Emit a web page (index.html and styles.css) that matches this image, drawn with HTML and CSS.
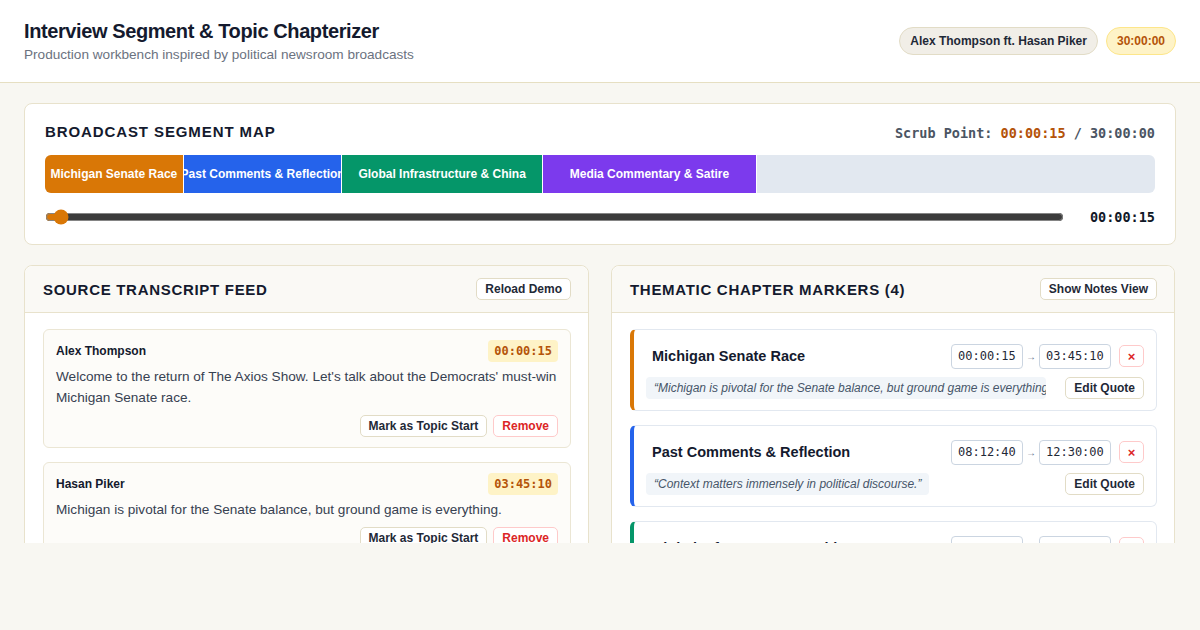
FILE: index.html
```html
<!DOCTYPE html>
<html lang="en">
<head>
<meta charset="utf-8">
<title>Interview Segment &amp; Topic Chapterizer</title>
<link rel="stylesheet" href="styles.css">
</head>
<body>
<header class="topbar">
  <div class="brand">
    <h1>Interview Segment &amp; Topic Chapterizer</h1>
    <p>Production workbench inspired by political newsroom broadcasts</p>
  </div>
  <div class="pills">
    <span class="pill">Alex Thompson ft. Hasan Piker</span>
    <span class="pill pill-time">30:00:00</span>
  </div>
</header>

<main class="main">
  <section class="card map">
    <div class="map-head">
      <h2 class="section-title map-title">BROADCAST SEGMENT MAP</h2>
      <div class="scrub">Scrub Point: <span class="scrub-now">00:00:15</span> / 30:00:00</div>
    </div>
    <div class="seg-bar">
      <div class="seg seg-orange" style="width:12.5%">Michigan Senate Race</div>
      <div class="seg seg-blue" style="width:14.3%">Past Comments &amp; Reflection</div>
      <div class="seg seg-green" style="width:18.05%">Global Infrastructure &amp; China</div>
      <div class="seg seg-purple" style="width:19.3%">Media Commentary &amp; Satire</div>
    </div>
    <div class="scrub-row">
      <input class="scrubber" type="range" min="0" max="1800" value="15">
      <span class="scrub-time">00:00:15</span>
    </div>
  </section>

  <div class="columns">
    <section class="panel">
      <div class="panel-head">
        <h2 class="section-title">SOURCE TRANSCRIPT FEED</h2>
        <button class="btn">Reload Demo</button>
      </div>
      <div class="panel-body">
        <article class="line">
          <div class="line-head">
            <span class="speaker">Alex Thompson</span>
            <span class="stamp">00:00:15</span>
          </div>
          <p class="line-text">Welcome to the return of The Axios Show. Let's talk about the Democrats' must-win Michigan Senate race.</p>
          <div class="line-actions">
            <button class="btn">Mark as Topic Start</button>
            <button class="btn btn-danger">Remove</button>
          </div>
        </article>
        <article class="line">
          <div class="line-head">
            <span class="speaker">Hasan Piker</span>
            <span class="stamp">03:45:10</span>
          </div>
          <p class="line-text">Michigan is pivotal for the Senate balance, but ground game is everything.</p>
          <div class="line-actions">
            <button class="btn">Mark as Topic Start</button>
            <button class="btn btn-danger">Remove</button>
          </div>
        </article>
        <article class="line">
          <div class="line-head">
            <span class="speaker">Alex Thompson</span>
            <span class="stamp">08:12:40</span>
          </div>
          <p class="line-text">Let's look back at some of your past comments.</p>
          <div class="line-actions">
            <button class="btn">Mark as Topic Start</button>
            <button class="btn btn-danger">Remove</button>
          </div>
        </article>
      </div>
    </section>

    <section class="panel">
      <div class="panel-head">
        <h2 class="section-title">THEMATIC CHAPTER MARKERS (4)</h2>
        <button class="btn">Show Notes View</button>
      </div>
      <div class="panel-body">
        <article class="chapter ch-orange">
          <div class="chapter-head">
            <h3 class="chapter-title">Michigan Senate Race</h3>
            <div class="chapter-times">
              <input class="time-input" value="00:00:15">
              <span class="arrow">→</span>
              <input class="time-input" value="03:45:10">
              <button class="btn-x">×</button>
            </div>
          </div>
          <div class="chapter-foot">
            <span class="quote">“Michigan is pivotal for the Senate balance, but ground game is everything.”</span>
            <button class="btn">Edit Quote</button>
          </div>
        </article>
        <article class="chapter ch-blue">
          <div class="chapter-head">
            <h3 class="chapter-title">Past Comments &amp; Reflection</h3>
            <div class="chapter-times">
              <input class="time-input" value="08:12:40">
              <span class="arrow">→</span>
              <input class="time-input" value="12:30:00">
              <button class="btn-x">×</button>
            </div>
          </div>
          <div class="chapter-foot">
            <span class="quote">“Context matters immensely in political discourse.”</span>
            <button class="btn">Edit Quote</button>
          </div>
        </article>
        <article class="chapter ch-green">
          <div class="chapter-head">
            <h3 class="chapter-title">Global Infrastructure &amp; China</h3>
            <div class="chapter-times">
              <input class="time-input" value="12:30:00">
              <span class="arrow">→</span>
              <input class="time-input" value="17:54:00">
              <button class="btn-x">×</button>
            </div>
          </div>
          <div class="chapter-foot">
            <span class="quote">“Infrastructure is the new foreign policy.”</span>
            <button class="btn">Edit Quote</button>
          </div>
        </article>
      </div>
    </section>
  </div>
</main>
</body>
</html>
```

FILE: styles.css
```css
* { box-sizing: border-box; }

html, body {
  margin: 0;
  padding: 0;
}

body {
  background: #f8f7f2;
  font-family: "Liberation Sans", Arial, sans-serif;
  color: #1f2937;
}

.topbar {
  display: flex;
  justify-content: space-between;
  align-items: center;
  background: #ffffff;
  border-bottom: 1px solid #e6dfc2;
  padding: 18px 24px 18px;
}

.brand h1 {
  margin: 0;
  font-size: 20px;
  line-height: 26px;
  font-weight: 700;
  letter-spacing: -0.4px;
  color: #141a2e;
}

.brand p {
  margin: 2px 0 0;
  font-size: 13.6px;
  line-height: 18px;
  color: #6b7280;
}

.pills {
  display: flex;
  gap: 8px;
}

.pill {
  display: inline-flex;
  align-items: center;
  height: 28px;
  padding: 0 10px;
  border-radius: 14px;
  background: #f1eee7;
  border: 1px solid #e2dcc6;
  font-size: 12px;
  font-weight: 700;
  color: #1f2937;
}

.pill-time {
  background: #fef3c7;
  border-color: #fde68a;
  color: #b45309;
}

.main {
  padding: 20px 24px 0;
}

.card {
  background: #ffffff;
  border: 1px solid #e8e2cc;
  border-radius: 8px;
}

.map {
  padding: 17px 20px 17px;
}

.map-head {
  display: flex;
  justify-content: space-between;
  align-items: center;
  height: 20px;
  margin-bottom: 14px;
}

.section-title {
  margin: 0;
  font-size: 15px;
  font-weight: 700;
  letter-spacing: 0.7px;
  color: #141a2e;
}

.map-title {
  letter-spacing: 0.9px;
}

.scrub {
  font-family: "DejaVu Sans Mono", monospace;
  font-size: 13.5px;
  font-weight: 700;
  color: #4b5563;
  padding-top: 4px;
}

.scrub-now {
  color: #b45309;
}

.seg-bar {
  display: flex;
  height: 38px;
  background: #e2e8f0;
  border-radius: 6px;
  overflow: hidden;
}

.seg {
  display: flex;
  align-items: center;
  justify-content: center;
  white-space: nowrap;
  overflow: hidden;
  color: #ffffff;
  font-size: 12px;
  font-weight: 700;
  border-right: 1px solid #ffffff;
}

.seg-orange { background: #d97706; }
.seg-blue { background: #2563eb; }
.seg-green { background: #059669; }
.seg-purple { background: #7c3aed; }

.scrub-row {
  display: flex;
  align-items: center;
  gap: 26px;
  height: 20px;
  margin-top: 14px;
}

.scrubber {
  flex: 1;
  margin: 0;
  accent-color: #d97706;
}

.scrub-time {
  font-family: "DejaVu Sans Mono", monospace;
  font-size: 13.5px;
  font-weight: 700;
  color: #111827;
}

.columns {
  display: grid;
  grid-template-columns: 565px 564px;
  gap: 22px;
  margin-top: 20px;
  height: 278px;
  overflow: hidden;
  align-items: start;
}

.panel {
  background: #ffffff;
  border: 1px solid #e8e2cc;
  border-radius: 8px;
}

.panel-head {
  display: flex;
  justify-content: space-between;
  align-items: center;
  height: 47px;
  padding: 0 17px 0 18px;
  background: #faf9f5;
  border-bottom: 1px solid #e8e2cc;
  border-radius: 8px 8px 0 0;
}

.btn {
  font-family: "Liberation Sans", Arial, sans-serif;
  font-size: 12px;
  font-weight: 700;
  color: #1f2937;
  background: #ffffff;
  border: 1px solid #e2dcc6;
  border-radius: 5px;
  height: 22px;
  padding: 0 8px;
  cursor: pointer;
}

.btn-danger {
  color: #dc2626;
  border-color: #fecaca;
}

.panel-body {
  display: flex;
  flex-direction: column;
  gap: 14px;
  padding: 16px 17px 16px 18px;
}

.line {
  background: #fdfcf9;
  border: 1px solid #ebe6d4;
  border-radius: 6px;
  padding: 10px 12px 10px;
}

.line-head {
  display: flex;
  justify-content: space-between;
  align-items: center;
  height: 22px;
}

.speaker {
  font-size: 12px;
  font-weight: 700;
  color: #141a2e;
}

.stamp {
  font-family: "DejaVu Sans Mono", monospace;
  font-size: 12px;
  font-weight: 700;
  color: #b45309;
  background: #fef3c7;
  border-radius: 4px;
  padding: 0 6px;
  line-height: 22px;
}

.line-text {
  margin: 4px 0 7px;
  font-size: 13.6px;
  line-height: 21px;
  color: #374151;
}

.line-actions {
  display: flex;
  justify-content: flex-end;
  gap: 6px;
}

.chapter {
  border: 1px solid #e2e8f0;
  border-left: 4px solid #d97706;
  border-radius: 6px;
  padding: 13px 12px 11px;
  background: #ffffff;
}

.ch-orange { border-left-color: #d97706; }
.ch-blue { border-left-color: #2563eb; }
.ch-green { border-left-color: #059669; }

.chapter-head {
  display: flex;
  justify-content: space-between;
  align-items: center;
  height: 26px;
}

.chapter-title {
  margin: 0 0 0 6px;
  font-size: 14.5px;
  font-weight: 700;
  color: #141a2e;
}

.chapter-times {
  display: flex;
  align-items: center;
}

.time-input {
  width: 72px;
  height: 25px;
  padding: 0 6px;
  border: 1px solid #cbd5e1;
  border-radius: 4px;
  font-family: "DejaVu Sans Mono", monospace;
  font-size: 12px;
  color: #1f2937;
  background: #ffffff;
}

.arrow {
  width: 16px;
  text-align: center;
  font-size: 10px;
  color: #64748b;
}

.btn-x {
  margin-left: 8px;
  width: 25px;
  height: 22px;
  padding: 0;
  border: 1px solid #fecaca;
  border-radius: 5px;
  background: #ffffff;
  color: #dc2626;
  font-size: 13px;
  font-weight: 700;
  cursor: pointer;
}

.chapter-foot {
  display: flex;
  justify-content: space-between;
  align-items: center;
  margin-top: 8px;
  height: 22px;
}

.quote {
  max-width: 400px;
  overflow: hidden;
  white-space: nowrap;
  background: #f1f5f9;
  border-radius: 4px;
  padding: 0 8px;
  line-height: 22px;
  font-size: 12px;
  font-style: italic;
  color: #475569;
}
```
